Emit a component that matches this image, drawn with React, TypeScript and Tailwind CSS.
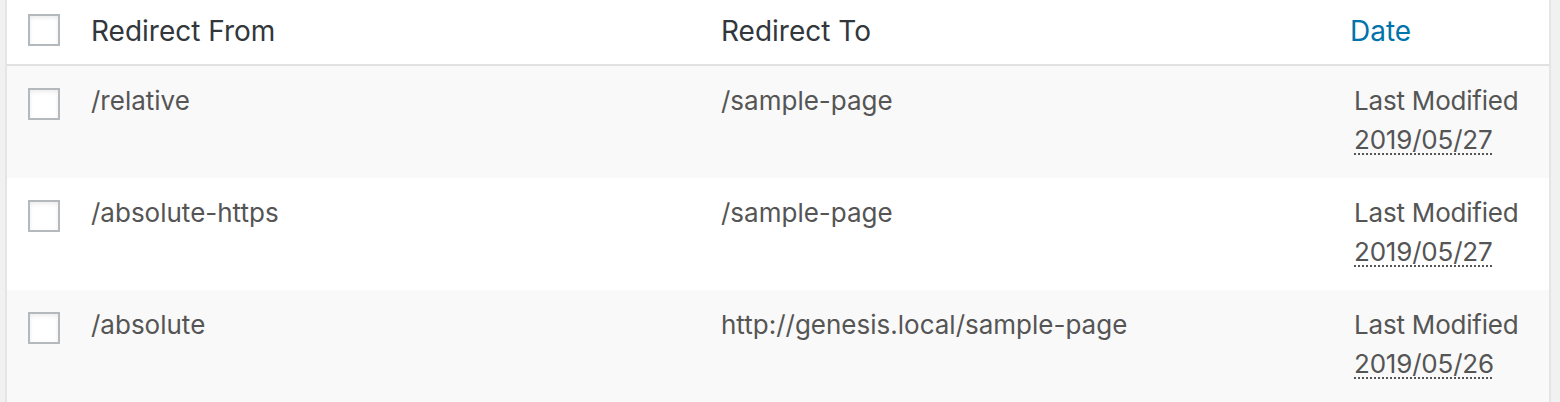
import React from "react";

const rows = [
  { from: "/relative", to: "/sample-page", date: "2019/05/27" },
  { from: "/absolute-https", to: "/sample-page", date: "2019/05/27" },
  { from: "/absolute", to: "http://genesis.local/sample-page", date: "2019/05/26" },
];

function Checkbox() {
  return (
    <span className="block h-[32px] w-[32px] border-2 border-[#b4b9be] bg-white shadow-[inset_0_2px_4px_rgba(0,0,0,0.08)]" />
  );
}

export default function App() {
  return (
    <div className="h-[402px] w-[1560px] overflow-hidden bg-[#f1f1f1] pl-[5px] pr-[9px] font-['Inter',sans-serif] text-[26px] leading-[39px]">
      <div className="border-x-2 border-[#e5e5e5] bg-white">
        {/* header */}
        <div className="flex h-[66px] border-b-2 border-[#e1e1e1] text-[28px] text-[#32373c]">
          <div className="w-[64px] pl-[21px] pt-[14px]">
            <Checkbox />
          </div>
          <div className="w-[630px] pl-[20px] pt-[12px]">Redirect From</div>
          <div className="w-[629px] pl-[20px] pt-[12px]">Redirect To</div>
          <div className="flex-1 pl-[20px] pt-[12px]">
            <a href="#" className="text-[#0073aa]">Date</a>
          </div>
        </div>

        {rows.map((row, i) => (
          <div
            key={i}
            className={`flex h-[112px] text-[#555] ${i % 2 === 0 ? "bg-[#f9f9f9]" : "bg-white"}`}
          >
            <div className="w-[64px] pl-[21px] pt-[22px]">
              <Checkbox />
            </div>
            <div className="w-[630px] pl-[20px] pt-[15px]">{row.from}</div>
            <div className="w-[629px] pl-[20px] pt-[15px]">{row.to}</div>
            <div className="flex-1 pl-[24px] pt-[15px] tracking-[-0.2px]">
              Last Modified
              <br />
              <span className="underline decoration-dotted decoration-2 underline-offset-[4px]">{row.date}</span>
            </div>
          </div>
        ))}
      </div>
    </div>
  );
}
